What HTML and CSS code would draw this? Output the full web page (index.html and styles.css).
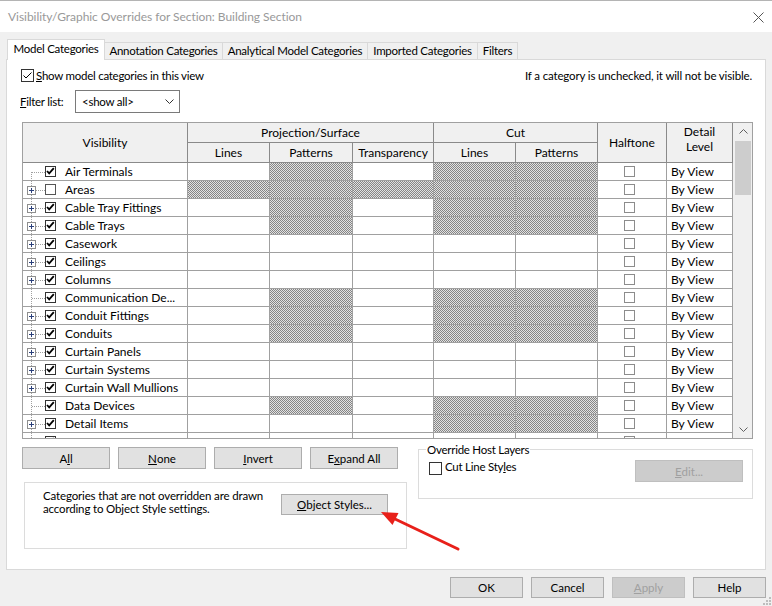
FILE: index.html
```html
<!DOCTYPE html>
<html>
<head>
<meta charset="utf-8">
<title>Visibility/Graphic Overrides</title>
<link rel="stylesheet" href="styles.css">
</head>
<body>
<svg class="defs" width="0" height="0" aria-hidden="true">
  <defs>
    <symbol id="t-first" viewBox="0 0 22 17">
      <path d="M8.5 9V17M9 9.5H22" stroke="#a0a0a0" stroke-width="1" stroke-dasharray="1 1" fill="none"/>
    </symbol>
    <symbol id="t-mid" viewBox="0 0 22 17">
      <path d="M8.5 0V17M9 9.5H22" stroke="#a0a0a0" stroke-width="1" stroke-dasharray="1 1" fill="none"/>
    </symbol>
    <symbol id="t-exp" viewBox="0 0 22 17">
      <path d="M8.5 0V17M13 9.5H22" stroke="#a0a0a0" stroke-width="1" stroke-dasharray="1 1" fill="none"/>
      <rect x="4.5" y="5.5" width="8" height="8" fill="#fff" stroke="#8e8e8e"/>
      <path d="M6 9.5H11M8.5 7V12" stroke="#2a3f7a" stroke-width="1" fill="none"/>
    </symbol>
    <symbol id="chk" viewBox="0 0 9 9">
      <path d="M1 4L3.2 6.4L7.8 1.2" stroke="#000" stroke-width="1.8" fill="none"/>
    </symbol>
  </defs>
</svg>

<div class="window">
  <div class="titlebar">
    <span class="title">Visibility/Graphic Overrides for Section: Building Section</span>
    <svg class="close" width="11" height="11" viewBox="0 0 11 11"><path d="M0.5 0.5L10.5 10.5M10.5 0.5L0.5 10.5" stroke="#555" stroke-width="1"/></svg>
  </div>

  <div class="tabs">
    <div class="tab active tab-model">Model Categories</div>
    <div class="tab tab-annot">Annotation Categories</div>
    <div class="tab tab-analyt">Analytical Model Categories</div>
    <div class="tab tab-imp">Imported Categories</div>
    <div class="tab tab-filt">Filters</div>
  </div>

  <div class="panel">
    <div class="toprow">
      <div class="chk">
        <span class="cbx"><svg width="11" height="11" viewBox="0 0 11 11"><path d="M1.5 5.5L4 8L9.5 2.5" stroke="#000" stroke-width="1" fill="none"/></svg></span>
        <span><u>S</u>how model categories in this view</span>
      </div>
      <span class="note">If a category is unchecked, it will not be visible.</span>
    </div>

    <div class="filterrow">
      <span class="flabel"><u>F</u>ilter list:</span>
      <div class="select">
        <span>&lt;show all&gt;</span>
        <svg width="9" height="5" viewBox="0 0 9 5"><path d="M0.5 0.5L4.5 4.5L8.5 0.5" stroke="#333" stroke-width="1" fill="none"/></svg>
      </div>
    </div>

    <div class="grid">
      <div class="gmain">
        <div class="ghead">
          <div class="hc hvis">Visibility</div>
          <div class="hc hproj">Projection/Surface</div>
          <div class="hc hcut">Cut</div>
          <div class="hc hhalf">Halftone</div>
          <div class="hc hdet">Detail<br>Level</div>
          <div class="hc">Lines</div>
          <div class="hc">Patterns</div>
          <div class="hc">Transparency</div>
          <div class="hc">Lines</div>
          <div class="hc">Patterns</div>
        </div>
        <div class="gbody">
          <div class="row">
            <div class="c vis"><svg class="tree"><use href="#t-first"/></svg><span class="cb"><svg><use href="#chk"/></svg></span><span class="name">Air Terminals</span></div>
            <div class="c"></div><div class="c h"></div><div class="c"></div><div class="c h"></div><div class="c h"></div>
            <div class="c ht"><span class="cb lt"></span></div><div class="c dl">By View</div>
          </div>
          <div class="row">
            <div class="c vis"><svg class="tree"><use href="#t-exp"/></svg><span class="cb off"></span><span class="name">Areas</span></div>
            <div class="c h"></div><div class="c h"></div><div class="c h"></div><div class="c h"></div><div class="c h"></div>
            <div class="c ht"><span class="cb lt"></span></div><div class="c dl">By View</div>
          </div>
          <div class="row">
            <div class="c vis"><svg class="tree"><use href="#t-exp"/></svg><span class="cb"><svg><use href="#chk"/></svg></span><span class="name">Cable Tray Fittings</span></div>
            <div class="c"></div><div class="c h"></div><div class="c"></div><div class="c h"></div><div class="c h"></div>
            <div class="c ht"><span class="cb lt"></span></div><div class="c dl">By View</div>
          </div>
          <div class="row">
            <div class="c vis"><svg class="tree"><use href="#t-exp"/></svg><span class="cb"><svg><use href="#chk"/></svg></span><span class="name">Cable Trays</span></div>
            <div class="c"></div><div class="c h"></div><div class="c"></div><div class="c h"></div><div class="c h"></div>
            <div class="c ht"><span class="cb lt"></span></div><div class="c dl">By View</div>
          </div>
          <div class="row">
            <div class="c vis"><svg class="tree"><use href="#t-exp"/></svg><span class="cb"><svg><use href="#chk"/></svg></span><span class="name">Casework</span></div>
            <div class="c"></div><div class="c"></div><div class="c"></div><div class="c"></div><div class="c"></div>
            <div class="c ht"><span class="cb lt"></span></div><div class="c dl">By View</div>
          </div>
          <div class="row">
            <div class="c vis"><svg class="tree"><use href="#t-exp"/></svg><span class="cb"><svg><use href="#chk"/></svg></span><span class="name">Ceilings</span></div>
            <div class="c"></div><div class="c"></div><div class="c"></div><div class="c"></div><div class="c"></div>
            <div class="c ht"><span class="cb lt"></span></div><div class="c dl">By View</div>
          </div>
          <div class="row">
            <div class="c vis"><svg class="tree"><use href="#t-exp"/></svg><span class="cb"><svg><use href="#chk"/></svg></span><span class="name">Columns</span></div>
            <div class="c"></div><div class="c"></div><div class="c"></div><div class="c"></div><div class="c"></div>
            <div class="c ht"><span class="cb lt"></span></div><div class="c dl">By View</div>
          </div>
          <div class="row">
            <div class="c vis"><svg class="tree"><use href="#t-mid"/></svg><span class="cb"><svg><use href="#chk"/></svg></span><span class="name">Communication De...</span></div>
            <div class="c"></div><div class="c h"></div><div class="c"></div><div class="c h"></div><div class="c h"></div>
            <div class="c ht"><span class="cb lt"></span></div><div class="c dl">By View</div>
          </div>
          <div class="row">
            <div class="c vis"><svg class="tree"><use href="#t-exp"/></svg><span class="cb"><svg><use href="#chk"/></svg></span><span class="name">Conduit Fittings</span></div>
            <div class="c"></div><div class="c h"></div><div class="c"></div><div class="c h"></div><div class="c h"></div>
            <div class="c ht"><span class="cb lt"></span></div><div class="c dl">By View</div>
          </div>
          <div class="row">
            <div class="c vis"><svg class="tree"><use href="#t-exp"/></svg><span class="cb"><svg><use href="#chk"/></svg></span><span class="name">Conduits</span></div>
            <div class="c"></div><div class="c h"></div><div class="c"></div><div class="c h"></div><div class="c h"></div>
            <div class="c ht"><span class="cb lt"></span></div><div class="c dl">By View</div>
          </div>
          <div class="row">
            <div class="c vis"><svg class="tree"><use href="#t-exp"/></svg><span class="cb"><svg><use href="#chk"/></svg></span><span class="name">Curtain Panels</span></div>
            <div class="c"></div><div class="c"></div><div class="c"></div><div class="c"></div><div class="c"></div>
            <div class="c ht"><span class="cb lt"></span></div><div class="c dl">By View</div>
          </div>
          <div class="row">
            <div class="c vis"><svg class="tree"><use href="#t-exp"/></svg><span class="cb"><svg><use href="#chk"/></svg></span><span class="name">Curtain Systems</span></div>
            <div class="c"></div><div class="c"></div><div class="c"></div><div class="c"></div><div class="c"></div>
            <div class="c ht"><span class="cb lt"></span></div><div class="c dl">By View</div>
          </div>
          <div class="row">
            <div class="c vis"><svg class="tree"><use href="#t-exp"/></svg><span class="cb"><svg><use href="#chk"/></svg></span><span class="name">Curtain Wall Mullions</span></div>
            <div class="c"></div><div class="c"></div><div class="c"></div><div class="c"></div><div class="c"></div>
            <div class="c ht"><span class="cb lt"></span></div><div class="c dl">By View</div>
          </div>
          <div class="row">
            <div class="c vis"><svg class="tree"><use href="#t-mid"/></svg><span class="cb"><svg><use href="#chk"/></svg></span><span class="name">Data Devices</span></div>
            <div class="c"></div><div class="c h"></div><div class="c"></div><div class="c h"></div><div class="c h"></div>
            <div class="c ht"><span class="cb lt"></span></div><div class="c dl">By View</div>
          </div>
          <div class="row">
            <div class="c vis"><svg class="tree"><use href="#t-exp"/></svg><span class="cb"><svg><use href="#chk"/></svg></span><span class="name">Detail Items</span></div>
            <div class="c"></div><div class="c"></div><div class="c"></div><div class="c h"></div><div class="c h"></div>
            <div class="c ht"><span class="cb lt"></span></div><div class="c dl">By View</div>
          </div>
          <div class="row">
            <div class="c vis"><svg class="tree"><use href="#t-exp"/></svg><span class="cb"><svg><use href="#chk"/></svg></span></div>
            <div class="c"></div><div class="c"></div><div class="c"></div><div class="c"></div><div class="c"></div>
            <div class="c ht"><span class="cb lt"></span></div><div class="c dl"></div>
          </div>
        </div>
      </div>
      <div class="vscroll">
        <div class="sbtn"><svg width="9" height="5" viewBox="0 0 9 5"><path d="M0.5 4.5L4.5 0.5L8.5 4.5" stroke="#606060" stroke-width="1" fill="none"/></svg></div>
        <div class="strack"><div class="thumb"></div></div>
        <div class="sbtn"><svg width="9" height="5" viewBox="0 0 9 5"><path d="M0.5 0.5L4.5 4.5L8.5 0.5" stroke="#606060" stroke-width="1" fill="none"/></svg></div>
      </div>
    </div>

    <div class="lower">
      <div class="lleft">
        <div class="btnrow">
          <div class="btn">A<u>l</u>l</div>
          <div class="btn"><u>N</u>one</div>
          <div class="btn"><u>I</u>nvert</div>
          <div class="btn">E<u>x</u>pand All</div>
        </div>
        <div class="osbox">
          <p>Categories that are not overridden are drawn according to Object Style settings.</p>
          <div class="btn osbtn"><u>O</u>bject Styles...</div>
        </div>
      </div>
      <div class="ohl">
        <span class="ohl-title">Override Host Layers</span>
        <div class="ohl-row">
          <span class="cbx"></span>
          <span class="ohl-label">Cut Line Sty<u>l</u>es</span>
          <div class="btn dis editbtn"><u>E</u>dit...</div>
        </div>
      </div>
    </div>
  </div>

  <div class="footer">
    <div class="btn fbtn">OK</div>
    <div class="btn fbtn">Cancel</div>
    <div class="btn fbtn dis"><u>A</u>pply</div>
    <div class="btn fbtn">Help</div>
  </div>

  <svg class="grip" width="8" height="8" viewBox="0 0 8 8">
    <rect x="6" y="0" width="2" height="2" fill="#bdbdbd"/>
    <rect x="3" y="3" width="2" height="2" fill="#bdbdbd"/>
    <rect x="6" y="3" width="2" height="2" fill="#bdbdbd"/>
    <rect x="0" y="6" width="2" height="2" fill="#bdbdbd"/>
    <rect x="3" y="6" width="2" height="2" fill="#bdbdbd"/>
    <rect x="6" y="6" width="2" height="2" fill="#bdbdbd"/>
  </svg>

  <svg class="arrow" width="772" height="606" viewBox="0 0 772 606">
    <path d="M458 549L395 519" stroke="#e8201a" stroke-width="3" stroke-linecap="round" fill="none"/>
    <path d="M381 512L398.5 513L392.5 525Z" fill="#e8201a"/>
  </svg>
</div>
</body>
</html>
```

FILE: styles.css
```css
* { box-sizing: border-box; }
html, body { margin: 0; padding: 0; }
body {
  width: 772px;
  height: 606px;
  overflow: hidden;
  background: #f0f0f0;
  font-family: "Lato", "Noto Sans", sans-serif;
  font-size: 11.5px;
  letter-spacing: -0.25px;
  color: #000;
}
u { text-decoration: underline; text-underline-offset: 1px; }
.defs { position: absolute; width: 0; height: 0; overflow: hidden; }

.window { position: relative; width: 772px; height: 606px; }

.titlebar {
  height: 32px;
  background: #fff;
  border-top: 1px solid #b4b4b4;
  display: flex;
  align-items: center;
  justify-content: space-between;
  padding: 0 8px 0 8px;
}
.title { color: #999; font-size: 12px; letter-spacing: -0.05px; line-height: 16px; padding-top: 1px; }
.close { display: block; margin-top: 1px; }

.tabs {
  display: flex;
  align-items: flex-end;
  height: 27px;
  padding-left: 7px;
}
.tab {
  height: 17px;
  border: 1px solid #d9d9d9;
  border-bottom: 0;
  background: #f0f0f0;
  margin-left: -1px;
  display: flex;
  align-items: center;
  justify-content: center;
  line-height: 14px;
  white-space: nowrap;
}
.tab.active {
  height: 21px;
  margin-left: 0;
  margin-bottom: -1px;
  padding-bottom: 2px;
  background: #fff;
  position: relative;
  z-index: 1;
}
.tab-model { width: 98px; }
.tab-annot { width: 119px; }
.tab-analyt { width: 146px; }
.tab-imp { width: 111px; }
.tab-filt { width: 41px; }

.panel {
  margin: 0 6px;
  height: 511px;
  background: #fff;
  border: 1px solid #d9d9d9;
}

.toprow {
  display: flex;
  justify-content: space-between;
  align-items: center;
  margin-top: 9px;
  height: 13px;
  padding: 0 13px 0 14px;
}
.note { letter-spacing: -0.15px; }
.chk { display: flex; align-items: center; gap: 2px; }
.cbx {
  width: 13px;
  height: 13px;
  border: 1px solid #333;
  background: #fff;
  display: inline-flex;
  flex: none;
}
.cbx svg { display: block; }

.filterrow {
  display: flex;
  align-items: center;
  margin-top: 8px;
  height: 23px;
  padding-left: 13px;
}
.flabel { width: 55px; }
.select {
  width: 105px;
  height: 23px;
  border: 1px solid #7a7a7a;
  display: flex;
  align-items: center;
  justify-content: space-between;
  padding: 0 5px 0 6px;
}
.select svg { display: block; }

.grid {
  display: flex;
  margin: 9px 0 0 15px;
  width: 731px;
  height: 317px;
  border: 1px solid #a0a0a0;
  font-size: 12px;
  letter-spacing: 0;
}
.gmain { width: 710px; display: flex; flex-direction: column; }
.ghead, .row {
  display: grid;
  grid-template-columns: 165px 82px 83px 81px 82px 82px 69px 66px;
}
.ghead { grid-template-rows: 20px 20px; background: #f0f0f0; }
.hc {
  border-right: 1px solid #8a8a8a;
  border-bottom: 1px solid #8a8a8a;
  display: flex;
  align-items: center;
  justify-content: center;
  text-align: center;
  line-height: 14px;
}
.hvis { grid-row: 1 / 3; grid-column: 1; }
.hproj { grid-row: 1; grid-column: 2 / 5; }
.hcut { grid-row: 1; grid-column: 5 / 7; }
.hhalf { grid-row: 1 / 3; grid-column: 7; }
.hdet { grid-row: 1 / 3; grid-column: 8; align-items: flex-start; padding-top: 1px; line-height: 15px; }

.gbody { flex: 1; overflow: hidden; }
.row { height: 18px; }
.c {
  border-right: 1px solid #a0a0a0;
  border-bottom: 1px solid #a0a0a0;
  background: #fff;
  display: flex;
  align-items: center;
  white-space: nowrap;
  overflow: hidden;
}
.c.h {
  background-color: #fff;
  background-image: repeating-conic-gradient(#858585 0 25%, #e2e2e2 0 50%);
  background-size: 2px 2px;
}
.tree { width: 22px; height: 17px; display: block; flex: none; }
.cb {
  width: 11px;
  height: 11px;
  border: 1px solid #333;
  background: #fff;
  display: inline-flex;
  flex: none;
}
.cb svg { width: 9px; height: 9px; display: block; }
.cb.off { border-color: #555; }
.cb.lt { border-color: #8c8c8c; }
.name { margin-left: 9px; }
.ht { padding-left: 26px; }
.dl { padding-left: 4px; }

.vscroll {
  width: 19px;
  background: #f0f0f0;
  display: flex;
  flex-direction: column;
}
.sbtn {
  height: 17px;
  display: flex;
  align-items: center;
  justify-content: center;
  padding-left: 1px;
}
.sbtn svg { display: block; }
.strack { flex: 1; padding: 1px 1px 0 2px; }
.thumb { height: 54px; background: #cdcdcd; }

.lower { display: flex; margin-top: 8px; padding-left: 15px; }
.lleft { width: 396px; flex: none; }
.btnrow { display: flex; gap: 8px; }
.btn {
  height: 22px;
  width: 88px;
  background: #e1e1e1;
  border: 1px solid #adadad;
  display: flex;
  align-items: center;
  justify-content: center;
  white-space: nowrap;
  flex: none;
  letter-spacing: 0;
}
.btn.dis { background: #cccccc; border-color: #bfbfbf; color: #a0a0a0; }

.osbox {
  margin: 13px 0 0 2px;
  width: 383px;
  height: 67px;
  border: 1px solid #dcdcdc;
  display: flex;
  align-items: flex-start;
  padding: 6px 0 0 18px;
}
.osbox p { margin: 0; width: 238px; line-height: 13px; flex: none; letter-spacing: -0.15px; }
.osbtn { margin-top: 5px; width: 107px; height: 21px; }

.ohl {
  width: 335px;
  height: 50px;
  margin-top: 2px;
  border: 1px solid #dcdcdc;
  display: flex;
  flex-direction: column;
  align-items: flex-start;
}
.ohl-title {
  margin: -7px 0 0 7px;
  padding: 0 1px;
  background: #fff;
  line-height: 14px;
}
.ohl-row {
  display: flex;
  align-items: flex-start;
  align-self: stretch;
  margin-top: 3px;
  padding: 0 9px 0 10px;
}
.ohl-row .cbx { margin-top: 2px; }
.ohl-label { margin-left: 3px; line-height: 14px; }
.editbtn { margin-left: auto; width: 108px; height: 22px; }

.footer {
  display: flex;
  justify-content: flex-end;
  gap: 8px;
  padding-right: 6px;
  margin-top: 7px;
}
.fbtn { width: 73px; height: 21px; }

.grip { position: absolute; right: 1px; bottom: 1px; display: block; }
.arrow { position: absolute; left: 0; top: 0; pointer-events: none; }
```
